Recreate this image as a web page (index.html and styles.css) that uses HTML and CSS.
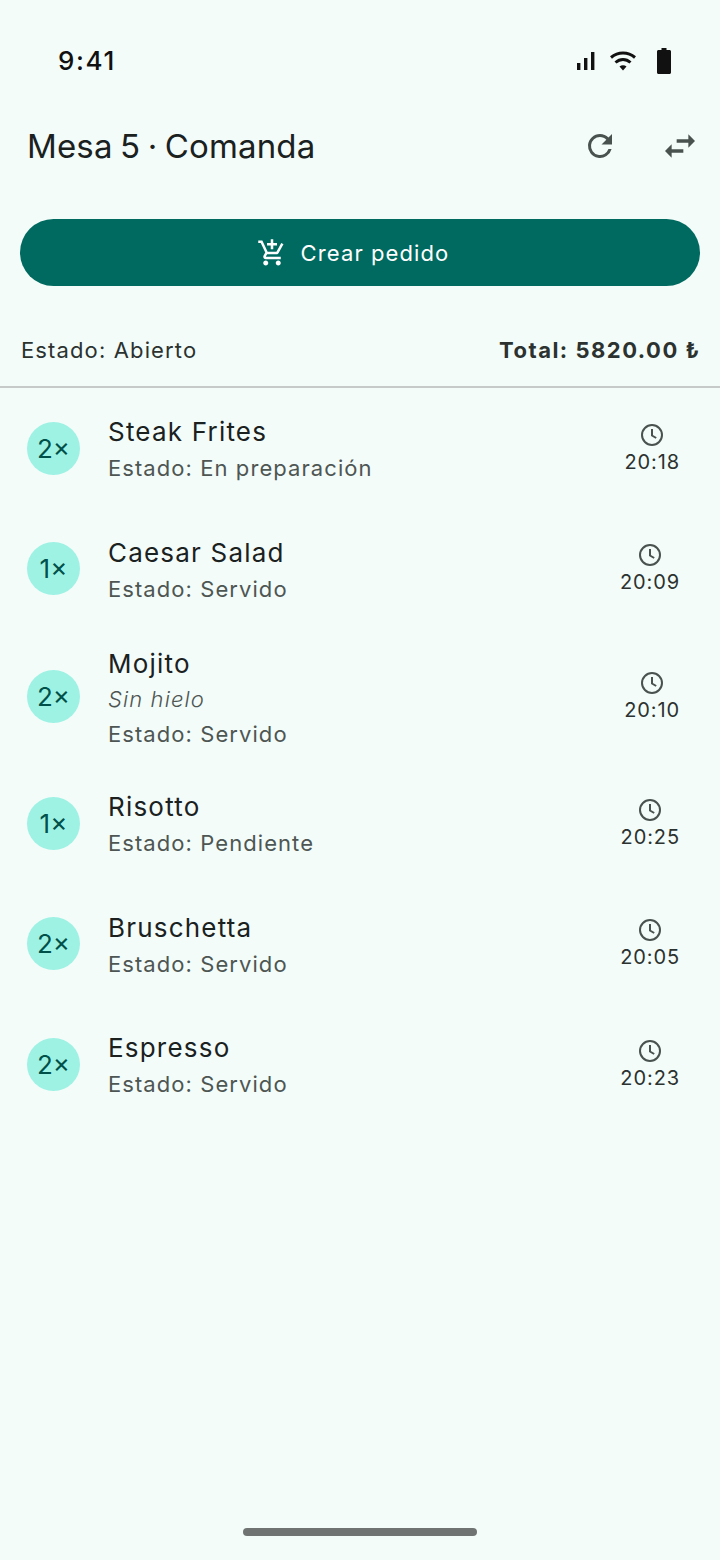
FILE: index.html
```html
<!DOCTYPE html>
<html lang="es">
<head>
    <meta charset="UTF-8">
    <meta name="viewport" content="width=device-width, initial-scale=1.0">
    <title>Mesa 5 · Comanda</title>
    <link rel="stylesheet" href="styles.css">
</head>
<body>
    <main class="screen">
        <div class="statusBar">
            <span class="clock">9:41</span>
            <div class="statusIcons">
                <svg width="20" height="20" viewBox="0 0 20 20" fill="#111"><rect x="1" y="12" width="3.4" height="7"/><rect x="8" y="7" width="3.4" height="12"/><rect x="15" y="1" width="3.4" height="18"/></svg>
                <svg class="wifi" width="28" height="22" viewBox="0 0 28 22" fill="none" stroke="#111" stroke-width="3"><path d="M2 7.500C9 1.500 19 1.500 26 7.500"/><path d="M6.500 12.500C11 8.500 17 8.500 21.500 12.500"/><path d="M10.500 16.500L14 20.500L17.500 16.500C15.500 14.800 12.500 14.800 10.500 16.500Z" fill="#111" stroke="none"/></svg>
                <svg class="battery" width="14" height="26" viewBox="0 0 14 26" fill="#111"><path d="M4.500 0H9.500V2H12.500C13.300 2 14 2.700 14 3.500V24.500C14 25.300 13.300 26 12.500 26H1.500C.7 26 0 25.300 0 24.500V3.500C0 2.700 .7 2 1.500 2H4.500Z"/></svg>
            </div>
        </div>

        <header class="topBar">
            <h1>Mesa 5 · Comanda</h1>
            <div class="actions">
                <svg width="36" height="36" viewBox="0 0 24 24" fill="#49524f"><path d="M17.650 6.350A7.950 7.950 0 0 0 12 4a8 8 0 1 0 7.730 10h-2.080A6 6 0 1 1 12 6c1.660 0 3.140.69 4.220 1.780L13 11h7V4z"/></svg>
                <svg width="40" height="40" viewBox="0 0 24 24" fill="#49524f"><path d="M6.990 11 3 15l3.990 4v-3H14v-2H6.990zM21 9l-3.990-4v3H10v2h7.010v3z"/></svg>
            </div>
        </header>

        <button class="createBtn">
            <svg width="30" height="30" viewBox="0 0 24 24" fill="#fff"><path d="M11 9h2V6h3V4h-3V1h-2v3H8v2h3v3zm-4 9c-1.100 0-1.990.9-1.990 2S5.900 22 7 22s2-.9 2-2-.9-2-2-2zm10 0c-1.100 0-1.990.9-1.990 2s.89 2 1.990 2 2-.9 2-2-.9-2-2-2zm-9.830-3.250.03-.12.9-1.630h7.450c.75 0 1.410-.41 1.750-1.030l3.860-7.010L19.420 4h-.01l-1.100 2-2.760 5H8.530l-.13-.27L6.160 6l-.95-2-.94-2H1v2h2l3.600 7.590-1.350 2.450c-.16.28-.25.61-.25.960 0 1.100.9 2 2 2h12v-2H7.420c-.13 0-.25-.11-.25-.25z"/></svg>
            <span>Crear pedido</span>
        </button>

        <div class="summary">
            <span>Estado: Abierto</span>
            <strong>Total: 5820.00 <span class="lira">₺</span></strong>
        </div>

        <ul class="orderList">
            <li class="orderRow">
                <div class="qty">2×</div>
                <div class="info"><p class="name">Steak Frites</p><p class="state">Estado: En preparación</p></div>
                <div class="time"><svg class="clockIcon" viewBox="0 0 24 24"><circle cx="12" cy="12" r="10"/><path d="M12 6v6.500l4.200 2.500"/></svg><span>20:18</span></div>
            </li>
            <li class="orderRow">
                <div class="qty">1×</div>
                <div class="info"><p class="name">Caesar Salad</p><p class="state">Estado: Servido</p></div>
                <div class="time"><svg class="clockIcon" viewBox="0 0 24 24"><circle cx="12" cy="12" r="10"/><path d="M12 6v6.500l4.200 2.500"/></svg><span>20:09</span></div>
            </li>
            <li class="orderRow tall">
                <div class="qty">2×</div>
                <div class="info"><p class="name">Mojito</p><p class="note">Sin hielo</p><p class="state">Estado: Servido</p></div>
                <div class="time"><svg class="clockIcon" viewBox="0 0 24 24"><circle cx="12" cy="12" r="10"/><path d="M12 6v6.500l4.200 2.500"/></svg><span>20:10</span></div>
            </li>
            <li class="orderRow">
                <div class="qty">1×</div>
                <div class="info"><p class="name">Risotto</p><p class="state">Estado: Pendiente</p></div>
                <div class="time"><svg class="clockIcon" viewBox="0 0 24 24"><circle cx="12" cy="12" r="10"/><path d="M12 6v6.500l4.200 2.500"/></svg><span>20:25</span></div>
            </li>
            <li class="orderRow">
                <div class="qty">2×</div>
                <div class="info"><p class="name">Bruschetta</p><p class="state">Estado: Servido</p></div>
                <div class="time"><svg class="clockIcon" viewBox="0 0 24 24"><circle cx="12" cy="12" r="10"/><path d="M12 6v6.500l4.200 2.500"/></svg><span>20:05</span></div>
            </li>
            <li class="orderRow">
                <div class="qty">2×</div>
                <div class="info"><p class="name">Espresso</p><p class="state">Estado: Servido</p></div>
                <div class="time"><svg class="clockIcon" viewBox="0 0 24 24"><circle cx="12" cy="12" r="10"/><path d="M12 6v6.500l4.200 2.500"/></svg><span>20:23</span></div>
            </li>
        </ul>

        <div class="homeBar"></div>
    </main>
</body>
</html>
```

FILE: styles.css
```css
* {
    box-sizing: border-box;
    padding: 0;
    margin: 0;
}

html {
    font-family: "Inter", "Liberation Sans", sans-serif;
    color: #1a211f;
}

body {
    background-color: #f3fcf9;
}

.screen {
    position: relative;
    display: flex;
    flex-direction: column;
    width: 720px;
    height: 1560px;
    overflow: hidden;
}

.statusBar {
    display: flex;
    justify-content: space-between;
    align-items: center;
    height: 44px;
    margin-top: 39px;
    padding: 0 49px 0 58px;
}

.clock {
    margin-top: -2px;
    font-size: 26px;
    font-weight: 500;
    letter-spacing: 1.6px;
    color: #111;
}

.statusIcons {
    display: flex;
    align-items: center;
    gap: 13px;
}

.battery {
    margin-left: 7px;
}

.topBar {
    display: flex;
    justify-content: space-between;
    align-items: center;
    height: 56px;
    margin-top: 35px;
    padding: 0 20px 0 27px;
}

h1 {
    font-size: 33px;
    font-weight: 400;
    letter-spacing: 0.15px;
    word-spacing: -2px;
}

.actions {
    display: flex;
    align-items: center;
    gap: 42px;
}

.createBtn {
    display: flex;
    justify-content: center;
    align-items: center;
    gap: 14px;
    height: 67px;
    margin: 45px 20px 0;
    padding-right: 14px;
    border: none;
    border-radius: 34px;
    background-color: #006a60;
    color: #fff;
    font-family: inherit;
    font-size: 22px;
    font-weight: 400;
    letter-spacing: 1.1px;
}

.summary {
    display: flex;
    justify-content: space-between;
    align-items: center;
    height: 102px;
    padding: 28px 21px 0;
    border-bottom: 2px solid #c6cbc9;
    font-size: 22px;
    letter-spacing: 1.13px;
    color: #2b3230;
}

.summary strong {
    font-weight: 700;
    letter-spacing: 1.5px;
}

.lira {
    font-size: 21px;
    letter-spacing: 0;
}

.orderList {
    list-style: none;
}

.orderRow {
    display: flex;
    align-items: center;
    height: 120.500px;
    padding: 0 40px 0 27px;
}

.orderRow.tall {
    height: 134px;
}

.qty {
    display: flex;
    justify-content: center;
    align-items: center;
    flex-shrink: 0;
    width: 53px;
    height: 53px;
    margin-right: 28px;
    border-radius: 50%;
    background-color: #9ef2e4;
    color: #00504a;
    font-size: 26px;
}

.info {
    flex: 1;
    padding-top: 3px;
}

.tall .info {
    padding-top: 4px;
}

.name {
    font-size: 26px;
    line-height: 36px;
    letter-spacing: 1.2px;
}

.state, .note {
    font-size: 22px;
    line-height: 34px;
    letter-spacing: 1.07px;
    color: #4e5653;
}

.state {
    margin-top: 1px;
}

.note {
    font-style: italic;
    font-weight: 300;
    letter-spacing: 1.1px;
}

.time {
    display: flex;
    flex-direction: column;
    align-items: center;
    gap: 3px;
    font-size: 20px;
    letter-spacing: 0.9px;
    color: #2b3230;
}

.clockIcon {
    width: 24px;
    height: 24px;
    fill: none;
    stroke: #49524f;
    stroke-width: 2;
}

.homeBar {
    position: absolute;
    left: 243px;
    bottom: 24px;
    width: 234px;
    height: 8px;
    border-radius: 4px;
    background-color: #6f7472;
}
```
